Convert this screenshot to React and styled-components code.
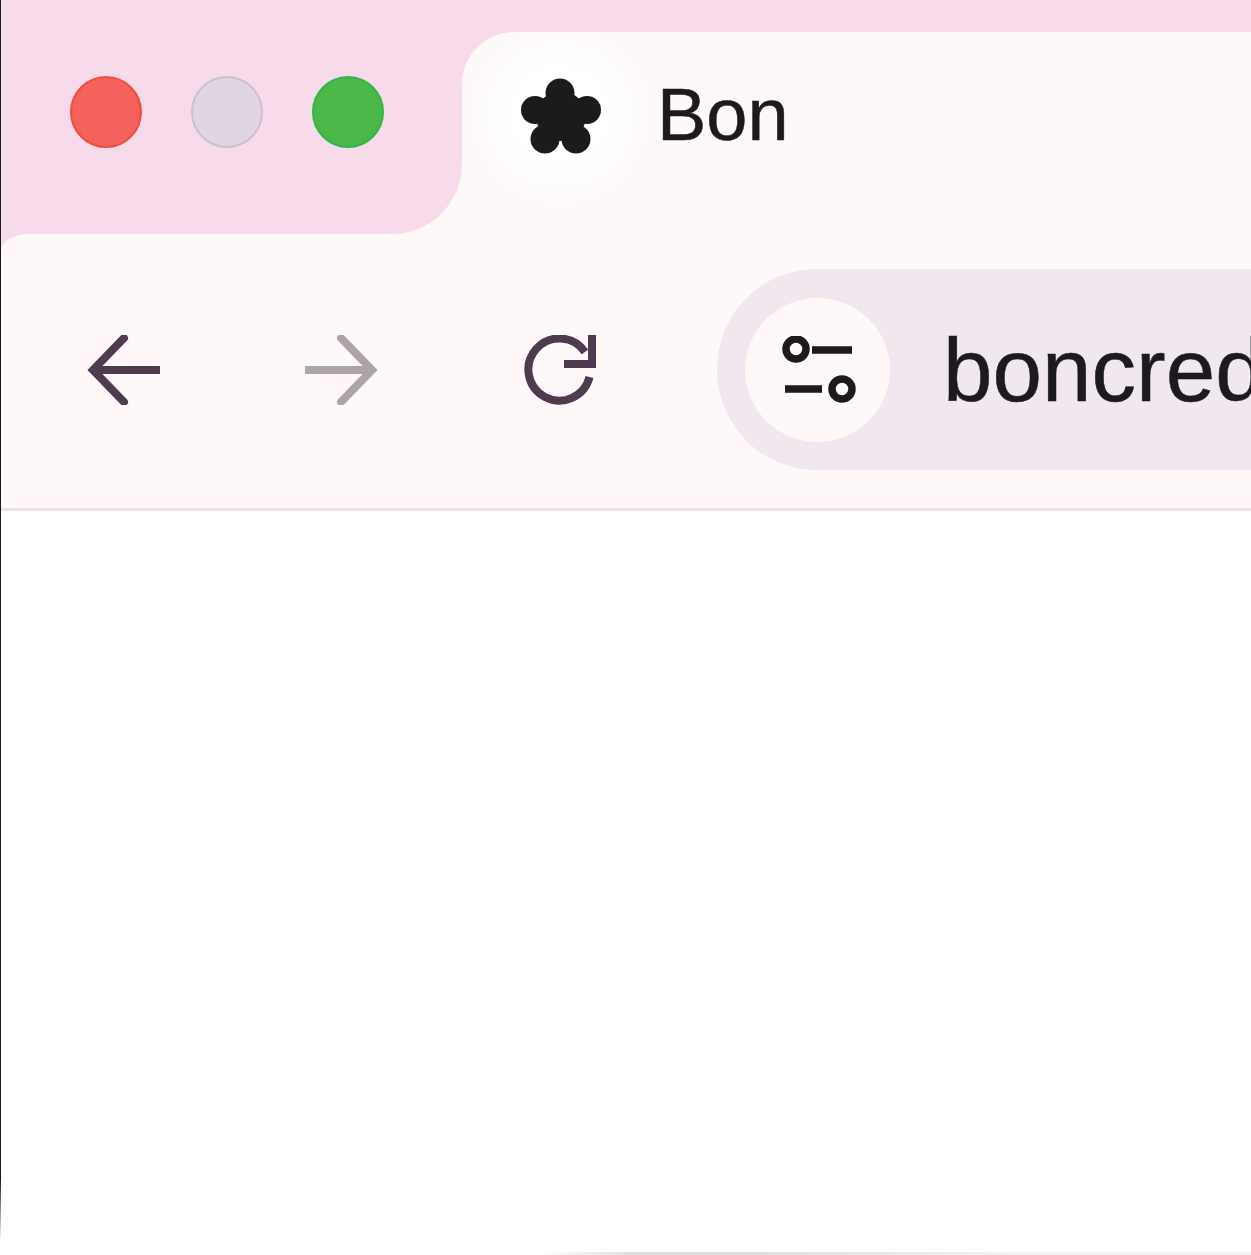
import React from 'react'
import styled, { createGlobalStyle } from 'styled-components'

const PINK = '#f7dbeb'
const CREAM = '#fef8f8'

function App() {
  return (
    <Window>
      <GlobalStyle />
      <TabStrip>
        <Lights>
          <Light $fill='#f3625c' $edge='#ef4c46' />
          <Light $fill='#e2d5e2' $edge='#cdbfcc' />
          <Light $fill='#4cb84a' $edge='#2fb646' />
        </Lights>
        <Tab>
          <FlowerIcon />
          <TabTitle>Bon</TabTitle>
        </Tab>
      </TabStrip>
      <Toolbar>
        <NavButton>
          <ArrowIcon color='#4f3b4f' />
        </NavButton>
        <NavButton>
          <ArrowIcon color='#aca4a8' flip />
        </NavButton>
        <NavButton>
          <ReloadIcon />
        </NavButton>
        <AddressBar>
          <SiteInfo>
            <TuneIcon />
          </SiteInfo>
          <Url>boncred</Url>
        </AddressBar>
      </Toolbar>
      <Content />
    </Window>
  )
}

function FlowerIcon() {
  return (
    <svg width='80' height='76' viewBox='0 0 80 76' fill='#1c1a1c'>
      <circle cx='39' cy='15' r='14.5' />
      <circle cx='66' cy='32' r='14' />
      <circle cx='55' cy='61' r='14.5' />
      <circle cx='24' cy='61' r='14.5' />
      <circle cx='14' cy='32' r='14' />
      <circle cx='40' cy='38' r='25' />
    </svg>
  )
}

function ArrowIcon({ color, flip }) {
  return (
    <svg width='73' height='70' viewBox='0 0 73 70' fill='none' stroke={color} strokeWidth='8'>
      <g transform={flip ? 'matrix(-1 0 0 1 73 0)' : undefined}>
        <path d='M73 35H6' />
        <path d='M37 3L6 35l31 32' strokeLinecap='round' />
      </g>
    </svg>
  )
}

function ReloadIcon() {
  return (
    <svg width='73' height='70' viewBox='0 0 73 70' fill='none' stroke='#4f3b4f' strokeWidth='8'>
      <path d='M66.5 42A31 31 0 1 1 62 17' />
      <path d='M69 0v29H41' />
    </svg>
  )
}

function TuneIcon() {
  return (
    <svg width='74' height='68' viewBox='0 0 74 68' fill='none' stroke='#1c1a1c' strokeWidth='7.5'>
      <circle cx='14' cy='13' r='10' />
      <path d='M30 14h40' />
      <circle cx='60' cy='53' r='10' />
      <path d='M3 53h37' />
    </svg>
  )
}

const GlobalStyle = createGlobalStyle`
  html,
  body {
    margin: 0;
    padding: 0;
    background: #fff;
    overflow: hidden;
  }
`

// the dark hairline on the left and the soft shadow along the bottom lie over the page
const Window = styled.div`
  position: relative;
  width: 1251px;
  height: 1255px;
  display: flex;
  flex-direction: column;
  overflow: hidden;
  background: ${PINK};
  font-family: 'Liberation Sans', Arial, sans-serif;
  color: #1c1a1c;

  &::before {
    content: '';
    position: absolute;
    top: 0;
    left: 0;
    width: 1px;
    height: 1240px;
    background: linear-gradient(#1a1a1a 95%, transparent);
  }

  &::after {
    content: '';
    position: absolute;
    left: 540px;
    right: 0;
    bottom: 0;
    height: 3px;
    background: linear-gradient(90deg, transparent, #dcdcdc 14%, #e2e2e2 40%, #f5f5f5 70%, #f5f5f5);
  }
`

const TabStrip = styled.div`
  height: 234px;
  flex-shrink: 0;
  display: flex;
  background: linear-gradient(${PINK} 50%, ${CREAM} 50%);
`

const Lights = styled.div`
  width: 462px;
  box-sizing: border-box;
  padding: 76px 0 0 70px;
  display: flex;
  align-items: flex-start;
  gap: 49px;
  background: ${PINK};
  border-bottom-right-radius: 70px;
`

const Light = styled.span`
  width: 72px;
  height: 72px;
  box-sizing: border-box;
  border-radius: 50%;
  background: ${(p) => p.$fill};
  border: 2px solid ${(p) => p.$edge};
`

const Tab = styled.div`
  flex: 1;
  margin-top: 32px;
  padding: 46px 0 0 59px;
  display: flex;
  align-items: flex-start;
  gap: 56px;
  border-top-left-radius: 52px;
  background: radial-gradient(circle 100px at 98px 83px, #fff 45%, transparent), ${CREAM};
`

const TabTitle = styled.span`
  margin-top: -5px;
  font-size: 74px;
  line-height: 84px;
  -webkit-text-stroke: 0.5px #1c1a1c;
`

const Toolbar = styled.div`
  height: 277px;
  flex-shrink: 0;
  box-sizing: border-box;
  padding: 35px 0 38px 87px;
  display: flex;
  align-items: center;
  background: ${CREAM};
  border-bottom: 3px solid #eee0e9;
  border-top-left-radius: 30px 18px;
`

const NavButton = styled.div`
  width: 218px;
  height: 70px;
  flex-shrink: 0;
`

const AddressBar = styled.div`
  flex: 1;
  align-self: stretch;
  margin-left: -24px;
  padding-left: 28px;
  display: flex;
  align-items: center;
  gap: 53px;
  overflow: hidden;
  background: #f0e7ef;
  border-radius: 100px 0 0 100px;
`

const SiteInfo = styled.div`
  width: 145px;
  height: 144px;
  box-sizing: border-box;
  padding-left: 3px;
  flex-shrink: 0;
  display: flex;
  align-items: center;
  justify-content: center;
  border-radius: 50%;
  background: ${CREAM};
`

const Url = styled.span`
  font-size: 89px;
  line-height: 96px;
  white-space: nowrap;
  -webkit-text-stroke: 0.5px #1c1a1c;
`

const Content = styled.main`
  flex: 1;
  background: #fff;
`

export default App
